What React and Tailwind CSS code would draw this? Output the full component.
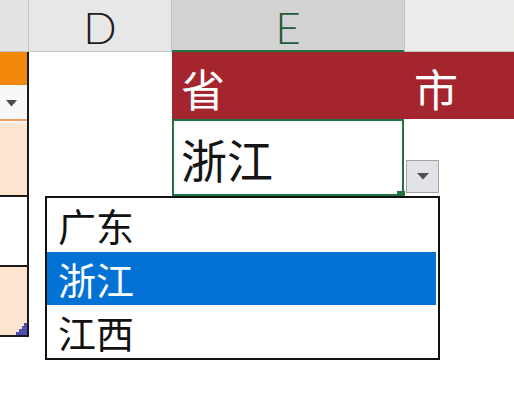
export default function App() {
  const cjk = { fontFamily: '"Noto Sans CJK SC", "Noto Sans", sans-serif' };
  const lat = { fontFamily: 'Lato, "Open Sans", sans-serif' };
  return (
    <div className="relative w-[514px] h-[418px] bg-white overflow-hidden">
      {/* Column header */}
      <div className="flex h-[52px] font-light" style={lat}>
        <div className="w-[29px] bg-[#e3e3e3] border-r border-b border-[#c4c4c4]" />
        <div className="w-[143px] bg-[#e7e7e7] border-r border-b border-[#c4c4c4] flex items-center justify-center text-[44px] text-[#1c1c1c] leading-none pt-[3px]">
          D
        </div>
        <div className="w-[232px] bg-[#d3d3d3] border-b-2 border-[#217346] flex items-center justify-center text-[44px] text-[#1e5b3a] leading-none pt-[3px]">
          E
        </div>
        <div className="flex-1 bg-[#ececec] border-l border-b border-[#c4c4c4] overflow-hidden flex items-center text-[44px] text-[#3a1a12] leading-none pt-[3px] pl-[105px]">
          F
        </div>
      </div>

      {/* Body */}
      <div className="flex">
        {/* Left column (C) */}
        <div className="w-[29px] flex flex-col border-r-2 border-[#1a1a1a]">
          <div className="h-[33px] bg-[#f1880c]" />
          <div className="h-[34px] bg-[#f8f8f8] flex items-center pl-[6px] pt-[2px]">
            <svg width="11" height="7" viewBox="0 0 11 7">
              <polygon points="0,0 11,0 5.5,6.5" fill="#4b4b4b" />
            </svg>
          </div>
          <div className="h-[2px] bg-[#f1a060]" />
          <div className="h-[2px] bg-[#f4f4f4]" />
          <div className="h-[72px] bg-[#fde4cf]" />
          <div className="h-[2px] bg-[#1a1a1a]" />
          <div className="h-[68px] bg-white" />
          <div className="h-[2px] bg-[#1a1a1a]" />
          <div className="h-[68px] bg-[#fde4cf] flex items-end justify-end">
            <svg width="11" height="12" viewBox="0 0 11 12">
              <polygon points="11,0 11,12 0,12 0,9 3,9 3,6 6,6 6,3 8,3 8,0" fill="#4b4fb4" />
            </svg>
          </div>
          <div className="h-[2px] bg-[#1a1a1a]" />
        </div>

        {/* D column */}
        <div className="w-[143px]" />

        {/* E / F columns */}
        <div className="flex-1 flex flex-col">
          <div className="h-[67px] bg-[#a4252d] flex text-white text-[44px] leading-none" style={cjk}>
            <div className="w-[232px] flex items-center pl-[9px] pt-[4px]">省</div>
            <div className="flex-1 flex items-center pl-[10px] pt-[4px]">市</div>
          </div>
          <div className="flex h-[77px]">
            <div
              className="w-[232px] border-2 border-[#217346] bg-white flex items-center pl-[7px] text-[46px] leading-none text-[#151515]"
              style={cjk}
            >
              浙江
            </div>
            <div className="flex-1 bg-white" />
          </div>
        </div>
      </div>

      {/* Fill handle */}
      <div className="absolute left-[397px] top-[191px] w-[8px] h-[6px] bg-[#217346]" />

      {/* Dropdown button */}
      <div className="absolute left-[406px] top-[160px] w-[33px] h-[33px] bg-[#e1e3e8] border border-[#a3a3a3] flex items-center justify-center">
        <svg width="12" height="7" viewBox="0 0 12 7">
          <polygon points="0,0 12,0 6,6.5" fill="#505050" />
        </svg>
      </div>

      {/* Dropdown list */}
      <div
        className="absolute left-[45px] top-[196px] w-[395px] border-2 border-[#111] bg-white flex flex-col text-[38px] leading-none text-[#111]"
        style={cjk}
      >
        <div className="h-[54px] flex items-center pl-[11px]">广东</div>
        <div className="h-[53px] flex items-center pl-[11px] bg-[#0472d4] text-white mr-[2px]">浙江</div>
        <div className="h-[53px] flex items-center pl-[11px]">江西</div>
      </div>
    </div>
  );
}
